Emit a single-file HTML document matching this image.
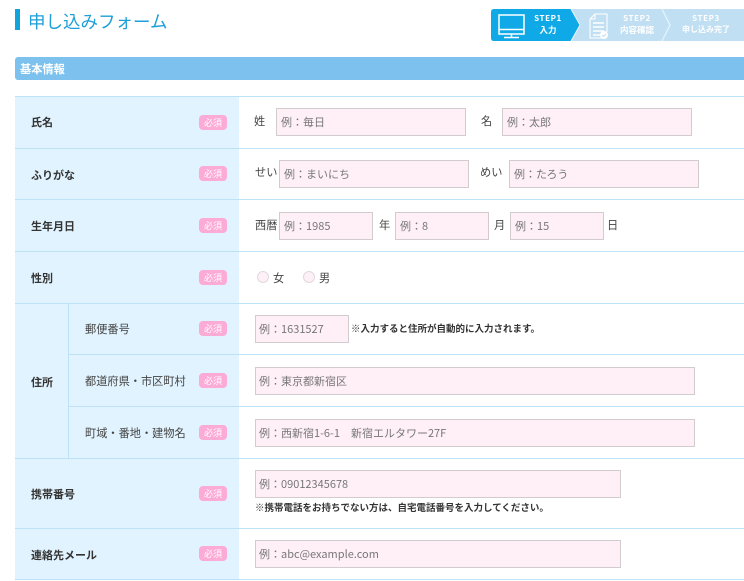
<!DOCTYPE html>
<html lang="ja"><head><meta charset="utf-8">
<style>
html,body{margin:0;padding:0;background:#fff}
#p{position:relative;width:744px;height:581px;overflow:hidden;background:#fff;font-family:"Noto Sans CJK JP","Liberation Sans",sans-serif;font-size:11px;color:#333}
#p div{position:absolute;white-space:nowrap}
.l{background:#bde2f6;height:1px}
.v{background:#bde2f6;width:1px}
.t{font-weight:700;font-size:11px;line-height:16px;color:#333}
.s{font-size:11.2px;line-height:16px;color:#444}
.r{left:199px;width:28px;height:15px;border-radius:4px;background:#fcaad6;color:#fff;font-size:9px;line-height:15px;text-align:center}
.i{box-sizing:border-box;height:28px;background:#fff0f8;border:1px solid #d2cccf;color:#777;font-size:11px;line-height:26px;padding-left:4px}
.o{width:10px;height:10px;border-radius:50%;border:1px solid #e2d8dd;background:#fdf0f6}
.n{font-size:9.5px;font-weight:700;line-height:12px;color:#333}
.st{color:#fff;font-weight:700;text-align:center;font-size:8px;line-height:12px}
</style></head><body>
<div id="p">
<div style="left:15px;top:9px;width:5px;height:21px;background:#12a3dc"></div>
<div style="left:28px;top:10px;font-size:17.5px;line-height:24px;color:#1d9fd8;font-weight:400">申し込みフォーム</div>

<svg style="position:absolute;left:491px;top:9px" width="253" height="32" viewBox="0 0 253 32">
<path d="M80 0H253V32H80Z" fill="#c0dff2"/>
<path d="M3 0H80L89 16 80 32H3Q0 32 0 29V3Q0 0 3 0Z" fill="#0fa9e8"/>
<path d="M80 0L89 16 80 32" fill="none" stroke="#e8f4fb" stroke-width="1"/>
<path d="M171 0L179 16 171 32" fill="none" stroke="#e8f4fb" stroke-width="1.2"/>
<g fill="none" stroke="#fff" stroke-width="1.5">
<rect x="8" y="6" width="25" height="19"/><path d="M8 20.5H33M20.5 25V28.5M13 28.5H28"/>
</g>
<g fill="none" stroke="#fff" stroke-width="1.1">
<path d="M104 5H116V23M104 5L99 10V29H112M99 10H104V5"/><path d="M102 14H113M102 18H113M102 22H113M102 26H110" stroke-width="1.5"/>
</g>
<circle cx="113" cy="26" r="4" fill="#fff"/><path d="M111 26l1.5 1.5 2.5-2.5" fill="none" stroke="#c0dff2"/>
</svg>
<div class="st" style="left:528px;top:13px;width:40px;letter-spacing:.6px">STEP1</div>
<div class="st" style="left:528px;top:24px;width:40px;font-size:8.5px">入力</div>
<div class="st" style="left:617px;top:13px;width:40px;letter-spacing:.6px">STEP2</div>
<div class="st" style="left:612px;top:24px;width:50px;font-size:8.5px">内容確認</div>
<div class="st" style="left:686px;top:13px;width:40px;letter-spacing:.6px">STEP3</div>
<div class="st" style="left:676px;top:24px;width:60px">申し込み完了</div>

<div style="left:15px;top:57px;width:729px;height:23px;background:#7dc2ee;border-radius:3px 0 0 3px"></div>
<div style="left:20px;top:61px;font-size:11.2px;font-weight:700;line-height:16px;color:#fff">基本情報</div>

<div style="left:15px;top:96px;width:224px;height:483px;background:#e1f3fe"></div>
<div class="l" style="left:15px;top:96px;width:729px"></div>
<div class="l" style="left:15px;top:148px;width:729px"></div>
<div class="l" style="left:15px;top:199px;width:729px"></div>
<div class="l" style="left:15px;top:251px;width:729px"></div>
<div class="l" style="left:15px;top:303px;width:729px"></div>
<div class="l" style="left:68px;top:354px;width:676px"></div>
<div class="l" style="left:68px;top:406px;width:676px"></div>
<div class="l" style="left:15px;top:458px;width:729px"></div>
<div class="l" style="left:15px;top:528px;width:729px"></div>
<div class="l" style="left:15px;top:579px;width:729px"></div>
<div class="v" style="left:68px;top:303px;height:155px"></div>

<div class="t" style="left:31px;top:114px">氏名</div>
<div class="t" style="left:31px;top:167px">ふりがな</div>
<div class="t" style="left:31px;top:218px">生年月日</div>
<div class="t" style="left:31px;top:270px">性別</div>
<div class="t" style="left:31px;top:374px">住所</div>
<div class="t" style="left:31px;top:486px">携帯番号</div>
<div class="t" style="left:31px;top:547px">連絡先メール</div>
<div class="s" style="left:85px;top:321px">郵便番号</div>
<div class="s" style="left:85px;top:373px">都道府県・市区町村</div>
<div class="s" style="left:85px;top:425px">町域・番地・建物名</div>

<div class="r" style="top:115px">必須</div>
<div class="r" style="top:166px">必須</div>
<div class="r" style="top:218px">必須</div>
<div class="r" style="top:270px">必須</div>
<div class="r" style="top:321px">必須</div>
<div class="r" style="top:373px">必須</div>
<div class="r" style="top:425px">必須</div>
<div class="r" style="top:486px">必須</div>
<div class="r" style="top:546px">必須</div>

<div class="s" style="left:254px;top:113px">姓</div>
<div class="i" style="left:276px;top:108px;width:190px">例：毎日</div>
<div class="s" style="left:481px;top:113px">名</div>
<div class="i" style="left:502px;top:108px;width:190px">例：太郎</div>

<div class="s" style="left:255px;top:164px">せい</div>
<div class="i" style="left:279px;top:160px;width:190px">例：まいにち</div>
<div class="s" style="left:480px;top:164px">めい</div>
<div class="i" style="left:509px;top:160px;width:190px">例：たろう</div>

<div class="s" style="left:255px;top:217px">西暦</div>
<div class="i" style="left:279px;top:212px;width:94px">例：1985</div>
<div class="s" style="left:379px;top:217px">年</div>
<div class="i" style="left:395px;top:212px;width:94px">例：8</div>
<div class="s" style="left:494px;top:217px">月</div>
<div class="i" style="left:510px;top:212px;width:94px">例：15</div>
<div class="s" style="left:607px;top:217px">日</div>

<div class="o" style="left:257px;top:271px"></div>
<div class="s" style="left:273px;top:270px">女</div>
<div class="o" style="left:303px;top:271px"></div>
<div class="s" style="left:319px;top:270px">男</div>

<div class="i" style="left:255px;top:315px;width:94px;padding-left:3px">例：1631527</div>
<div class="n" style="left:351px;top:322px">※入力すると住所が自動的に入力されます。</div>
<div class="i" style="left:255px;top:367px;width:440px;padding-left:3px">例：東京都新宿区</div>
<div class="i" style="left:255px;top:419px;width:440px;padding-left:3px">例：西新宿1-6-1　新宿エルタワー27F</div>
<div class="i" style="left:255px;top:470px;width:366px;padding-left:3px">例：09012345678</div>
<div class="n" style="left:255px;top:501px">※携帯電話をお持ちでない方は、自宅電話番号を入力してください。</div>
<div class="i" style="left:255px;top:540px;width:366px;padding-left:3px">例：abc@example.com</div>
</div>
</body></html>
